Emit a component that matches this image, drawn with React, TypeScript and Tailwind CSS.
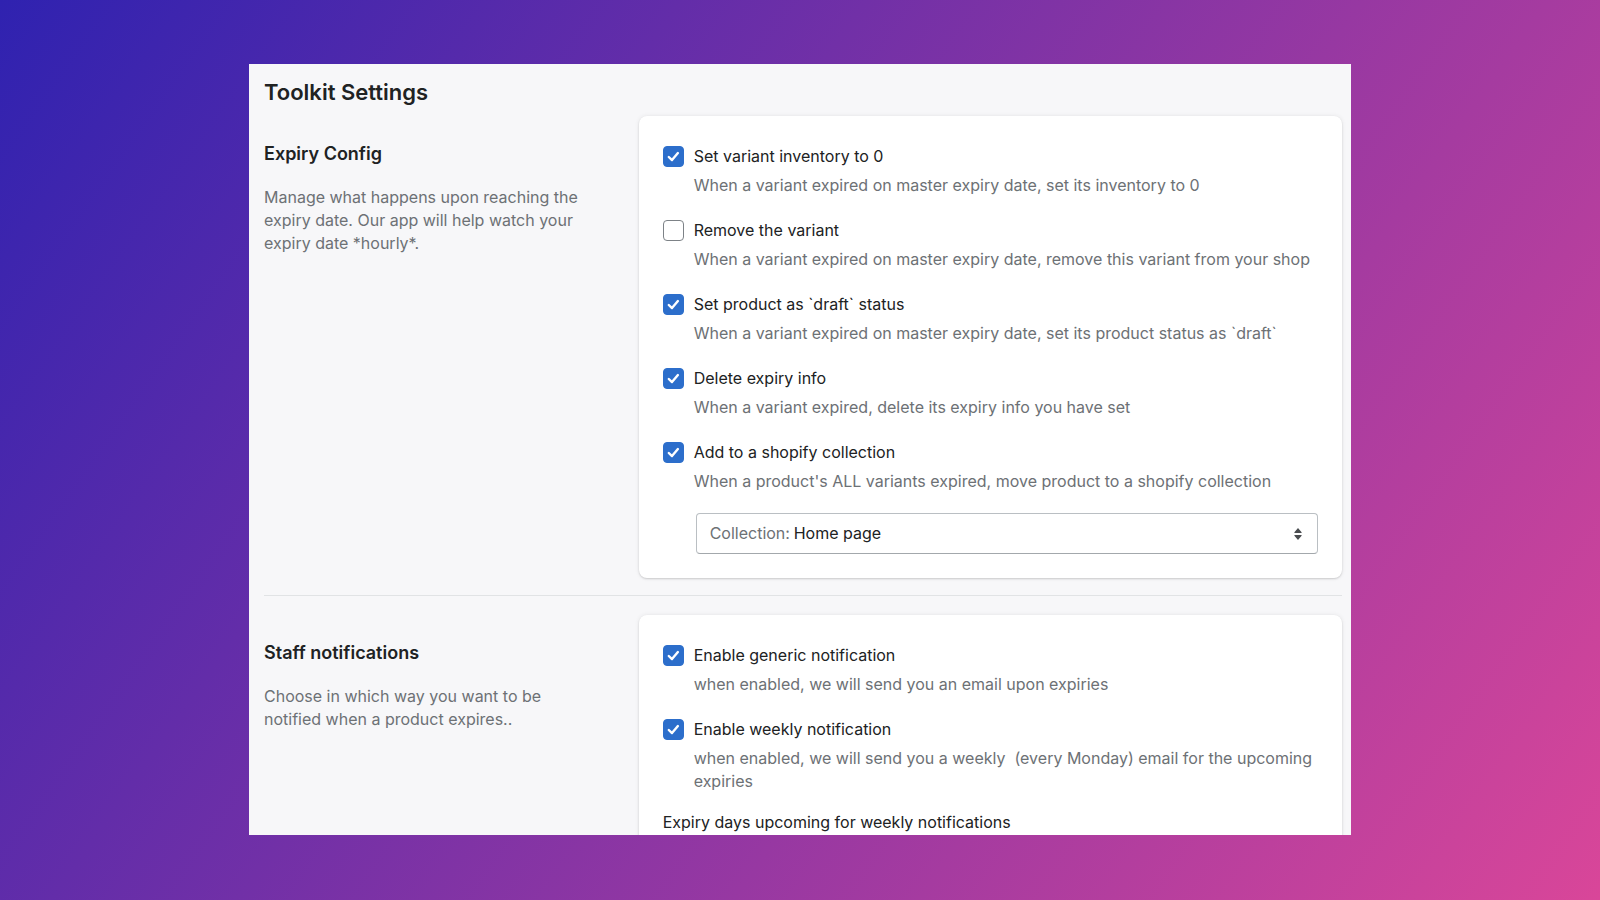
import { useId, useState } from "react";
import type { ReactNode } from "react";

type OptionProps = {
  label: string;
  help: string;
  checked?: boolean;
};

const expiryOptions: OptionProps[] = [
  {
    label: "Set variant inventory to 0",
    help: "When a variant expired on master expiry date, set its inventory to 0",
    checked: true,
  },
  {
    label: "Remove the variant",
    help: "When a variant expired on master expiry date, remove this variant from your shop",
  },
  {
    label: "Set product as `draft` status",
    help: "When a variant expired on master expiry date, set its product status as `draft`",
    checked: true,
  },
  {
    label: "Delete expiry info",
    help: "When a variant expired, delete its expiry info you have set",
    checked: true,
  },
  {
    label: "Add to a shopify collection",
    help: "When a product's ALL variants expired, move product to a shopify collection",
    checked: true,
  },
];

const staffOptions: OptionProps[] = [
  {
    label: "Enable generic notification",
    help: "when enabled, we will send you an email upon expiries",
    checked: true,
  },
  {
    label: "Enable weekly notification",
    help: "when enabled, we will send you a weekly \u00a0(every Monday) email for the upcoming expiries",
    checked: true,
  },
];

const Option = ({ label, help, checked = false }: OptionProps) => {
  const id = useId();
  const [on, setOn] = useState(checked);

  return (
    <div className="grid grid-cols-[21px_1fr] gap-x-[10px] gap-y-[6px]">
      <span className="grid h-[23px] items-center">
        <input
          id={id}
          type="checkbox"
          checked={on}
          onChange={(e) => setOn(e.target.checked)}
          aria-describedby={`${id}-help`}
          className="col-start-1 row-start-1 h-[21px] w-[21px] appearance-none rounded border border-[#7d8287] bg-white checked:border-[#2c6ecb] checked:bg-[#2c6ecb]"
        />
        {on && (
          <svg
            viewBox="0 0 21 21"
            className="pointer-events-none col-start-1 row-start-1 h-[21px] w-[21px]"
            fill="none"
            stroke="#fff"
            strokeWidth="2.4"
            strokeLinecap="round"
            strokeLinejoin="round"
          >
            <path d="M5.8 11 9 14.1l5.9-7" />
          </svg>
        )}
      </span>
      <label htmlFor={id} className="text-[#202223]">
        {label}
      </label>
      <p id={`${id}-help`} className="col-start-2 text-[#6d7175]">
        {help}
      </p>
    </div>
  );
};

type SectionProps = {
  title: string;
  description: string;
  children: ReactNode;
};

const Section = ({ title, description, children }: SectionProps) => {
  return (
    <section className="grid grid-cols-[1fr_2fr] gap-x-[23px]">
      <div className="pt-[25px] pr-6">
        <h2 className="text-lg leading-[26px] font-semibold text-[#202223]">
          {title}
        </h2>
        <p className="mt-[19px] text-[#6d7175]">{description}</p>
      </div>
      <div className="rounded-lg bg-white px-6 pt-[29px] pb-6 shadow-[0_0_5px_rgba(23,24,24,0.07),0_1px_2px_rgba(0,0,0,0.15)]">
        {children}
      </div>
    </section>
  );
};

const CollectionSelect = () => {
  return (
    <div className="mt-5 ml-[33px] grid items-center">
      <label
        htmlFor="collection"
        className="pointer-events-none z-10 col-start-1 row-start-1 justify-self-start pl-[14px] text-[#6d7175]"
      >
        Collection:
      </label>
      <select
        id="collection"
        className="col-start-1 row-start-1 h-[41px] w-full appearance-none rounded border border-[#babfc3] border-b-[#a3a8ac] bg-white pl-[97px] text-[#202223]"
      >
        <option>Home page</option>
      </select>
      <svg
        viewBox="0 0 8 12"
        className="pointer-events-none z-10 col-start-1 row-start-1 mr-4 h-3 w-2 justify-self-end"
        fill="#4a4d50"
      >
        <path d="M4 0 7.6 4.2Q8 5 7.2 5H.8Q0 5 .4 4.2ZM4 12 .4 7.8Q0 7 .8 7h6.4q.8 0 .4.8Z" />
      </svg>
    </div>
  );
};

export default function App() {
  return (
    <div className="h-screen bg-[linear-gradient(125deg,#2f22b0,#d94699)] px-8 pt-16 pb-[65px] font-['Inter',sans-serif] text-base leading-[23px]">
      <main className="mx-auto h-full max-w-[1102px] overflow-hidden bg-[#f7f7f9] pt-3 pr-[9px] pl-[15px]">
        <h1 className="text-[22px] leading-8 font-semibold text-[#202223]">
          Toolkit Settings
        </h1>
        <div className="mt-2">
          <Section
            title="Expiry Config"
            description="Manage what happens upon reaching the expiry date. Our app will help watch your expiry date *hourly*."
          >
            <div className="flex flex-col gap-[22px]">
              {expiryOptions.map((option) => (
                <Option key={option.label} {...option} />
              ))}
            </div>
            <CollectionSelect />
          </Section>
          <hr className="mt-[17px] mb-[19px] border-[#e1e3e5]" />
          <Section
            title="Staff notifications"
            description="Choose in which way you want to be notified when a product expires.."
          >
            <div className="flex flex-col gap-[22px]">
              {staffOptions.map((option) => (
                <Option key={option.label} {...option} />
              ))}
            </div>
            <label htmlFor="days" className="mt-[18px] block text-[#202223]">
              Expiry days upcoming for weekly notifications
            </label>
            <input
              id="days"
              type="number"
              defaultValue={7}
              className="mt-1 h-[41px] w-full rounded border border-[#babfc3] px-3"
            />
          </Section>
        </div>
      </main>
    </div>
  );
}
